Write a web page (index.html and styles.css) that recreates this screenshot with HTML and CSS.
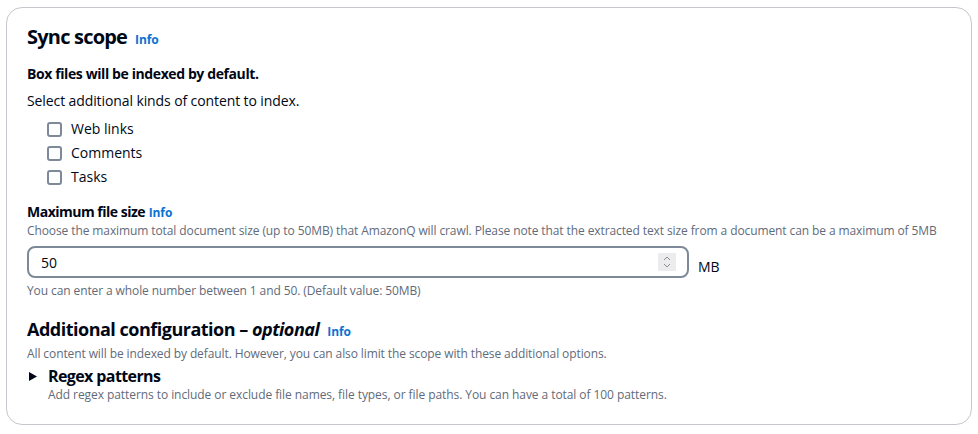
FILE: index.html
```html
<!DOCTYPE html>
<html>
<head>
<meta charset="utf-8">
<link rel="stylesheet" href="styles.css">
</head>
<body>
<div class="container">
  <div class="header">
    <h2 class="title">Sync scope</h2>
    <a class="info">Info</a>
  </div>
  <p class="strong">Box files will be indexed by default.</p>
  <p class="text">Select additional kinds of content to index.</p>
  <div class="checks">
    <label class="check"><span class="box"></span>Web links</label>
    <label class="check"><span class="box"></span>Comments</label>
    <label class="check"><span class="box"></span>Tasks</label>
  </div>

  <div class="field">
    <div class="field-label"><span class="strong-inline">Maximum file size</span> <a class="info">Info</a></div>
    <div class="desc">Choose the maximum total document size (up to 50MB) that AmazonQ will crawl. Please note that the extracted text size from a document can be a maximum of 5MB</div>
    <div class="input-row">
      <div class="input">
        <span class="value">50</span>
        <span class="spinner">
          <svg width="10" height="16" viewBox="0 0 10 16"><path d="M2 6 L5 3 L8 6" fill="none" stroke="#8c8c94" stroke-width="1"/><path d="M2 10 L5 13 L8 10" fill="none" stroke="#8c8c94" stroke-width="1"/></svg>
        </span>
      </div>
      <span class="unit">MB</span>
    </div>
    <div class="hint">You can enter a whole number between 1 and 50. (Default value: 50MB)</div>
  </div>

  <div class="section">
    <div class="header">
      <h2 class="title2">Additional configuration – <i>optional</i></h2>
      <a class="info">Info</a>
    </div>
    <div class="desc desc2">All content will be indexed by default. However, you can also limit the scope with these additional options.</div>
    <div class="expander">
      <span class="caret">
        <svg width="8" height="9" viewBox="0 0 8 9"><path d="M0 0 L8 4.5 L0 9 Z" fill="#000716"/></svg>
      </span>
      <div>
        <div class="exp-title">Regex patterns</div>
        <div class="exp-desc">Add regex patterns to include or exclude file names, file types, or file paths. You can have a total of 100 patterns.</div>
      </div>
    </div>
  </div>
</div>
</body>
</html>
```
FILE: styles.css
```css
* { box-sizing: border-box; }
body {
  margin: 0;
  padding: 7px 6px;
  background: #ffffff;
  font-family: "Open Sans", "Noto Sans", Arial, sans-serif;
  color: #000716;
}
.container {
  width: 966px;
  height: 418px;
  border: 1px solid #c6c6cd;
  border-radius: 16px;
  padding: 17px 20px 20px 20px;
}
.header {
  display: flex;
  align-items: baseline;
  gap: 8px;
}
.title {
  margin: 0;
  font-size: 20px;
  line-height: 24px;
  font-weight: 700;
  letter-spacing: -0.8px;
}
.title2 {
  margin: 0;
  font-size: 18px;
  line-height: 22px;
  font-weight: 700;
  letter-spacing: -0.5px;
}
.title2 i { font-weight: 700; }
.info {
  color: #0972d3;
  font-size: 12px;
  font-weight: 700;
  letter-spacing: -0.1px;
}
.strong {
  margin: 15px 0 0;
  font-size: 14px;
  line-height: 20px;
  font-weight: 700;
  letter-spacing: -0.4px;
}
.text {
  margin: 7px 0 0;
  font-size: 14px;
  line-height: 20px;
  letter-spacing: -0.1px;
}
.checks {
  margin: 8px 0 0 20px;
  display: flex;
  flex-direction: column;
  gap: 4px;
}
.check {
  display: flex;
  align-items: center;
  gap: 9px;
  font-size: 14px;
  line-height: 20px;
}
.box {
  width: 15px;
  height: 15px;
  border: 2px solid #7d8998;
  border-radius: 3px;
  display: inline-block;
}
.field { margin-top: 15px; }
.field-label { font-size: 14px; line-height: 20px; }
.strong-inline { font-weight: 700; letter-spacing: -0.5px; }
.desc {
  font-size: 12px;
  line-height: 16px;
  color: #5f6b7a;
  letter-spacing: -0.1px;
}
.input-row {
  margin-top: 7px;
  display: flex;
  align-items: flex-end;
  gap: 9px;
}
.input {
  width: 662px;
  height: 32px;
  border: 2px solid #7d8998;
  border-radius: 8px;
  display: flex;
  align-items: center;
  justify-content: space-between;
  padding: 0 11px 0 12px;
}
.value { font-size: 14px; }
.spinner {
  width: 18px;
  height: 18px;
  background: #ececef;
  display: flex;
  align-items: center;
  justify-content: center;
}
.unit { font-size: 14px; line-height: 22px; }
.hint {
  margin-top: 5px;
  font-size: 12px;
  line-height: 16px;
  color: #5f6b7a;
  letter-spacing: -0.1px;
}
.section { margin-top: 19px; }
.desc2 { margin-top: 6px; }
.expander {
  margin-top: 4px;
  display: flex;
  gap: 11px;
  padding-left: 2px;
}
.caret { padding-top: 6px; line-height: 0; }
.exp-title {
  font-size: 16px;
  line-height: 20px;
  font-weight: 700;
  letter-spacing: -0.6px;
}
.exp-desc {
  margin-top: 1px;
  font-size: 12px;
  line-height: 16px;
  color: #5f6b7a;
  letter-spacing: -0.07px;
}
```
